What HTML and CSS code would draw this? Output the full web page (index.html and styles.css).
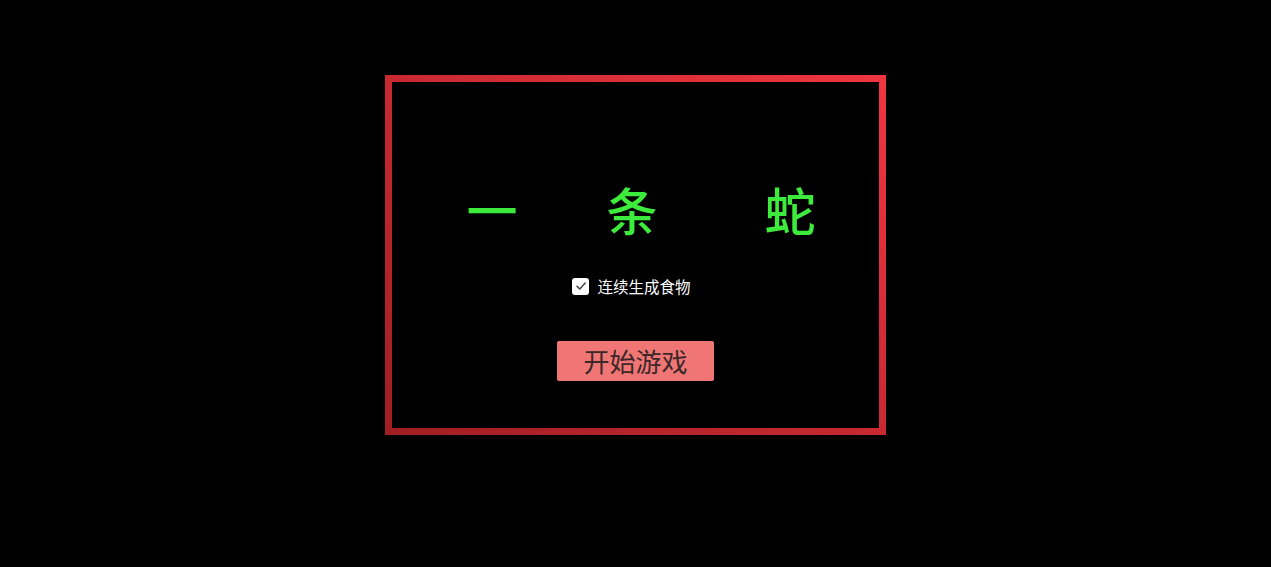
FILE: index.html
```html
<!DOCTYPE html>
<html lang="zh">
<head>
<meta charset="utf-8">
<title>一条蛇</title>
<link rel="stylesheet" href="styles.css">
</head>
<body>
<div class="frame">
  <div class="title">
    <span class="ch">一</span>
    <span class="ch ch-2">条</span>
    <span class="ch ch-3">蛇</span>
  </div>
  <label class="option">
    <span class="checkbox">
      <svg viewBox="0 0 16 16" width="16" height="16"><path d="M4 8.3 L6.8 11 L12.2 5" fill="none" stroke="#444" stroke-width="1.5" stroke-linecap="round" stroke-linejoin="round"/></svg>
    </span>
    <span class="option-text">连续生成食物</span>
  </label>
  <button class="start">开始游戏</button>
</div>
</body>
</html>
```
FILE: styles.css
```css
html, body {
  margin: 0;
  padding: 0;
  background: #000;
}
body {
  font-family: "Noto Sans CJK SC", "Noto Sans", sans-serif;
  height: 567px;
  overflow: hidden;
}
.frame {
  box-sizing: border-box;
  width: 501px;
  height: 360px;
  margin: 75px auto 0;
  border: 7px solid #d02a31;
  border-image: linear-gradient(to top right, #a11e23, #ef3540) 1;
  display: flex;
  flex-direction: column;
  align-items: center;
  padding-top: 102px;
}
.title {
  align-self: stretch;
  display: flex;
  padding-left: 74px;
  height: 52px;
  font-size: 51px;
  line-height: 51px;
  font-weight: 500;
  color: #3deb3d;
}
.ch {
  width: 52px;
  text-align: center;
}
.ch-2 { margin-left: 88px; }
.ch-3 { margin-left: 106px; }
.option {
  margin-top: 40px;
  margin-right: 8px;
  display: flex;
  align-items: center;
  height: 20px;
  color: #fff;
  font-size: 15.5px;
  line-height: 20px;
}
.checkbox {
  width: 17px;
  height: 17px;
  background: #fff;
  border-radius: 3px;
  margin-right: 8px;
  display: flex;
  align-items: center;
  justify-content: center;
}
.option-text {
  white-space: nowrap;
}
.start {
  margin-top: 45px;
  width: 157px;
  height: 40px;
  border: none;
  border-radius: 2px;
  background: #f07676;
  color: #3a2727;
  font-family: "Noto Sans CJK SC", sans-serif;
  font-size: 26px;
  line-height: 40px;
  padding: 0;
}
```
